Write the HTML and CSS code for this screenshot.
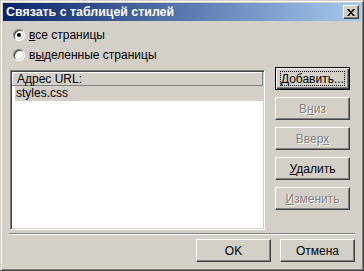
FILE: index.html
```html
<!DOCTYPE html>
<html>
<head>
<meta charset="utf-8">
<link rel="stylesheet" href="styles.css">
</head>
<body>
<div class="window">
  <div class="titlebar">
    <span class="title">Связать с таблицей стилей</span>
    <span class="close"><svg width="8" height="7" viewBox="0 0 8 7"><path d="M0 0h2l2 2.5L6 0h2L5 3.5 8 7H6L4 4.5 2 7H0l3-3.5z" fill="#000"/></svg></span>
  </div>
  <div class="content">
    <div class="radios">
      <div class="radio"><span class="circle checked"></span><span class="label"><u>в</u>се страницы</span></div>
      <div class="radio"><span class="circle"></span><span class="label">в<u>ы</u>деленные страницы</span></div>
    </div>
    <div class="main">
      <div class="list">
        <div class="list-head">Адрес URL:</div>
        <div class="list-row">styles.css</div>
      </div>
      <div class="side">
        <div class="btn default"><span class="focus"><u>Д</u>обавить...</span></div>
        <div class="btn disabled"><span>В<u>н</u>из</span></div>
        <div class="btn disabled"><span>Ввер<u>х</u></span></div>
        <div class="btn"><span><u>У</u>далить</span></div>
        <div class="btn disabled"><span><u>И</u>зменить</span></div>
      </div>
    </div>
    <div class="sep"></div>
    <div class="footer">
      <div class="btn"><span>OK</span></div>
      <div class="btn"><span>Отмена</span></div>
    </div>
  </div>
</div>
</body>
</html>
```

FILE: styles.css
```css
html, body {
  margin: 0;
  padding: 0;
  background: #d4d0c8;
}
.window {
  width: 364px;
  height: 271px;
  box-sizing: border-box;
  background: #d4d0c8;
  border: 1px solid;
  border-color: #d4d0c8 #404040 #404040 #d4d0c8;
  box-shadow: inset 1px 1px #fff, inset -1px -1px #808080;
  padding: 2px;
  font-family: "Liberation Sans", Arial, sans-serif;
  font-size: 12px;
  color: #000;
  display: flex;
  flex-direction: column;
}
.titlebar {
  height: 18px;
  background: linear-gradient(to right, #0a246a, #a6caf0);
  display: flex;
  align-items: center;
  justify-content: space-between;
  padding: 0 2px 0 3px;
}
.title {
  color: #fff;
  font-weight: bold;
  font-size: 12.4px;
}
.close {
  width: 16px;
  height: 14px;
  box-sizing: border-box;
  background: #d4d0c8;
  border: 1px solid;
  border-color: #fff #404040 #404040 #fff;
  box-shadow: inset -1px -1px #808080;
  display: flex;
  align-items: center;
  justify-content: center;
}
.content {
  flex: 1;
  padding: 4px 5px 0 7px;
  display: flex;
  flex-direction: column;
}
.radios {
  display: flex;
  flex-direction: column;
  margin-bottom: 5px;
}
.radio {
  height: 20px;
  display: flex;
  align-items: center;
  gap: 4px;
  padding-left: 3px;
}
.circle {
  width: 12px;
  height: 12px;
  box-sizing: border-box;
  border-radius: 50%;
  background: #fff;
  border: 1px solid;
  border-color: #808080 #fff #fff #808080;
  box-shadow: inset 1px 1px #404040, inset -1px -1px #d4d0c8;
  position: relative;
}
.circle.checked::after {
  content: "";
  position: absolute;
  left: 3px;
  top: 3px;
  width: 4px;
  height: 4px;
  border-radius: 50%;
  background: #000;
}
.main {
  display: flex;
  gap: 10px;
}
.list {
  width: 255px;
  height: 160px;
  box-sizing: border-box;
  background: #fff;
  border: 1px solid;
  border-color: #808080 #fff #fff #808080;
  box-shadow: inset 1px 1px #404040, inset -1px -1px #d4d0c8;
  padding: 1px;
  display: flex;
  flex-direction: column;
}
.list-head {
  height: 14px;
  box-sizing: border-box;
  background: #d4d0c8;
  border-right: 1px solid #808080;
  border-bottom: 1px solid #808080;
  box-shadow: inset 1px 1px #fff;
  padding-left: 5px;
  padding-top: 1px;
  line-height: 12px;
}
.list-row {
  height: 15px;
  margin-left: 3px;
  background: #d4d0c8;
  padding-left: 1px;
  line-height: 15px;
}
.side {
  display: flex;
  flex-direction: column;
  gap: 7px;
  margin-top: -3px;
}
.btn {
  width: 75px;
  height: 23px;
  box-sizing: border-box;
  background: #d4d0c8;
  border: 1px solid;
  border-color: #fff #404040 #404040 #fff;
  box-shadow: inset -1px -1px #808080;
  display: flex;
  align-items: center;
  justify-content: center;
}
.btn.default {
  border: 1px solid #000;
  box-shadow: inset 1px 1px #fff, inset -1px -1px #404040, inset -2px -2px #808080;
}
.focus {
  width: 63px;
  height: 13px;
  border: 1px dotted #000;
  display: flex;
  align-items: center;
  justify-content: center;
}
.btn.disabled {
  color: #808080;
  text-shadow: 1px 1px #fff;
}
.sep {
  margin-top: 3px;
  height: 0;
  border-top: 1px solid #808080;
  border-bottom: 1px solid #fff;
  margin-left: -1px;
  margin-right: 1px;
}
.footer {
  display: flex;
  justify-content: flex-end;
  gap: 9px;
  margin-top: 4px;
  padding-right: 1px;
}
u {
  text-decoration: underline;
  text-underline-offset: 1px;
}
```
